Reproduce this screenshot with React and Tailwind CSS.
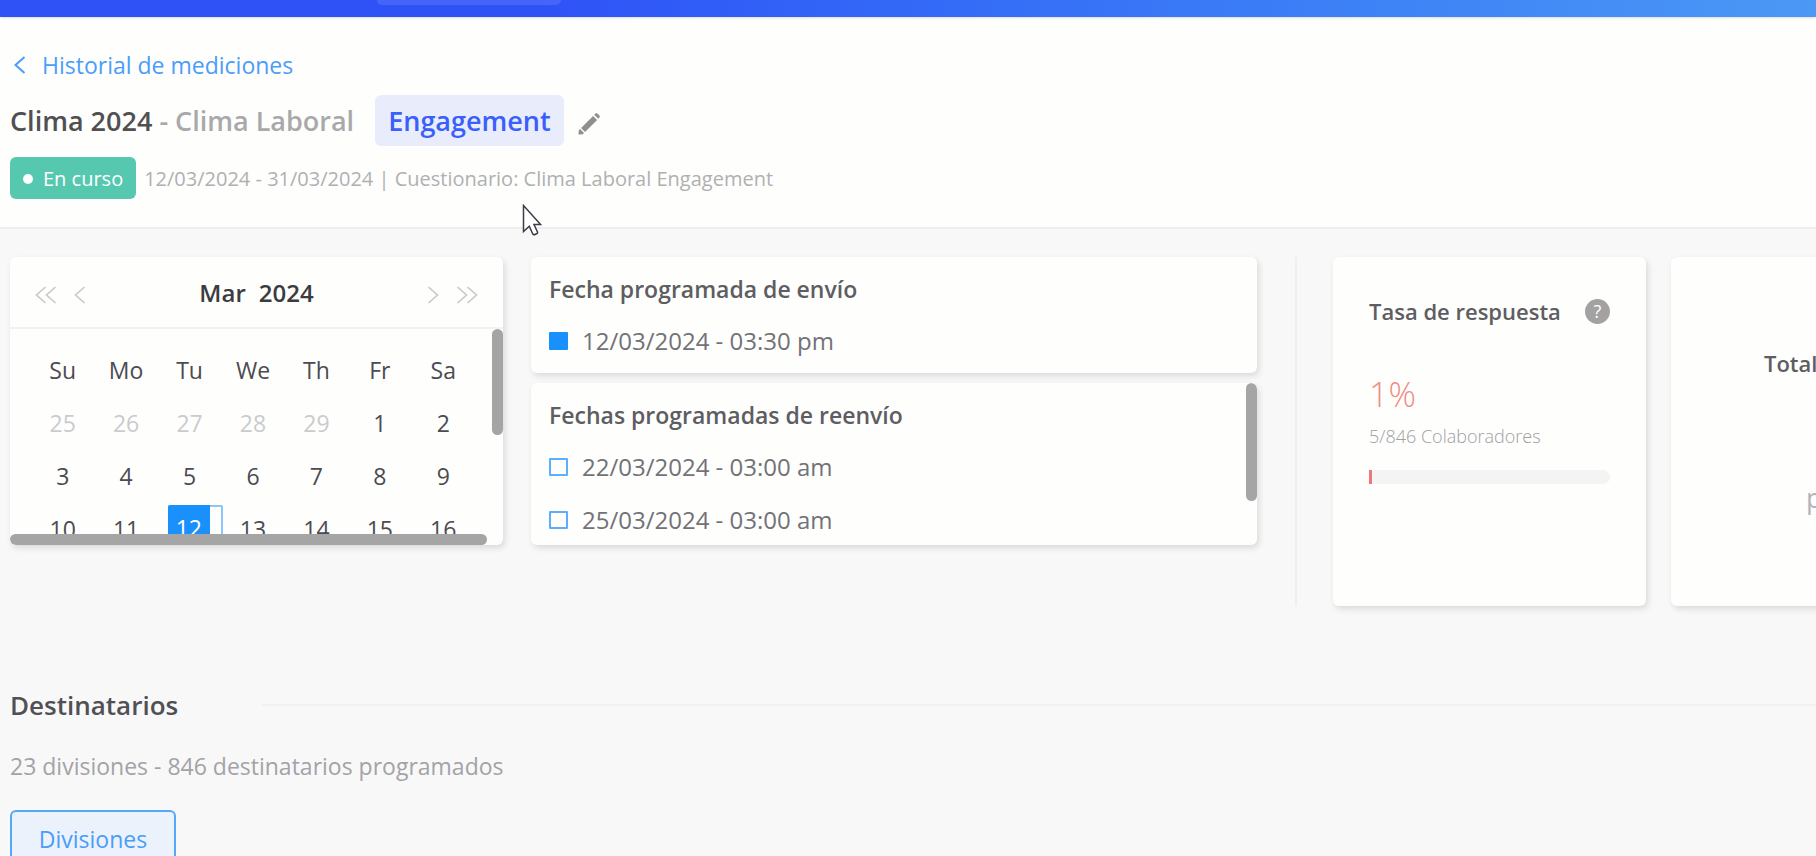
const WEEKDAYS = ["Su", "Mo", "Tu", "We", "Th", "Fr", "Sa"];

const WEEKS = [
  [25, 26, 27, 28, 29, 1, 2],
  [3, 4, 5, 6, 7, 8, 9],
  [10, 11, 12, 13, 14, 15, 16],
];

const RESEND_DATES = ["22/03/2024 - 03:00 am", "25/03/2024 - 03:00 am"];

const CARD = "rounded-md bg-[#fefefd] shadow-[2px_3px_6px_rgba(0,0,0,0.12)]";

function Chevron({ double = false, flip = false, className = "" }) {
  return (
    <svg
      viewBox={double ? "0 0 22 18" : "0 0 12 18"}
      className={`${double ? "w-[22px]" : "w-3"} h-[18px] ${flip ? "rotate-180" : ""} ${className}`}
      fill="none"
      stroke="currentColor"
      strokeWidth="1.6"
      aria-hidden="true"
    >
      <path d="M10.500 1L1.500 9l9 8" />
      {double && <path d="M20.500 1L11.500 9l9 8" />}
    </svg>
  );
}

function PageHeader() {
  return (
    <header className="relative h-[212px] shrink-0 border-b-2 border-[#eeeeee] bg-[#fefefd] px-[10px] pt-7">
      <a
        href="#historial"
        className="flex w-fit items-center gap-4 pl-1 text-[23px] leading-10 text-[#4a9df8]"
      >
        <Chevron className="stroke-2" />
        Historial de mediciones
      </a>

      <div className="mt-[10px] flex h-[51px] items-center text-[27px] font-semibold">
        <h1 className="pt-[2px] text-[#505052]">
          Clima 2024 <span className="text-[#a9a9ab]">- Clima Laboral</span>
        </h1>
        <span className="ml-[21px] flex h-full items-center rounded-md bg-[#e9edfb] px-[13px] pt-[2px] text-[#3a5ffb]">
          Engagement
        </span>
        <button type="button" aria-label="Editar" className="ml-[11px] text-[#8f8f8f]">
          <svg viewBox="0 0 24 24" className="mt-[6px] size-7" fill="currentColor">
            <path d="M3.300 17.300 3 21l3.700-.3 1-1-3.400-3.400zM5.200 15.400l10.300-10.300 3.400 3.400L8.600 18.800zM16.500 4.100l1-1c.6-.6 1.300-.5 1.800 0l1.600 1.600c.5.500.6 1.200 0 1.800l-1 1z" />
          </svg>
        </button>
      </div>

      <div className="mt-[11px] flex items-center gap-2 text-[20px] text-[#b0b0b2]">
        <span className="flex h-[42px] items-center gap-[10px] rounded-md bg-[#56c8b0] px-[13px] pt-[2px] text-white">
          <span className="size-[10px] rounded-full bg-white" />
          En curso
        </span>
        <p className="pt-[2px]">
          12/03/2024 - 31/03/2024 | Cuestionario: Clima Laboral Engagement
        </p>
      </div>

      <svg
        viewBox="0 0 20 32"
        className="absolute top-[187px] left-[522px] h-8 w-5"
        fill="#fff"
        stroke="#3c3c48"
        strokeWidth="1.5"
        aria-hidden="true"
      >
        <path d="M1.500 1.500v26l5.800-5.300 3.600 8 1.300.6 3-1.400.4-1.200-3.600-7.700h6.600z" />
      </svg>
    </header>
  );
}

function CalendarDay({ day, muted, selected }) {
  if (selected) {
    return (
      <td className="h-[53px] p-0 align-top">
        <div className="mt-[2px] ml-[10px] flex h-[46px] w-[55px] rounded-xs border-t-2 border-r-2 border-[#8cc5fb]">
          <span className="-mt-[2px] flex w-[42px] items-center justify-center rounded-tl-xs bg-[#1a90fc] text-white">
            {day}
          </span>
        </div>
      </td>
    );
  }
  return (
    <td className={`h-[53px] p-0 text-center ${muted ? "text-[#cbcbcd]" : ""}`}>
      {day}
    </td>
  );
}

function CalendarCard() {
  return (
    <section className={`${CARD} relative flex h-[288px] w-[493px] shrink-0 flex-col overflow-hidden`}>
      <div className="flex h-[72px] shrink-0 items-center border-b-2 border-[#f2f2f3] px-[25px] pt-[6px] text-[#c8c8ca]">
        <button type="button" aria-label="Año anterior">
          <Chevron double />
        </button>
        <button type="button" aria-label="Mes anterior" className="ml-[17px]">
          <Chevron />
        </button>
        <h2 className="flex-1 pb-1 text-center text-[24px] font-semibold text-[#3b3b40]">
          <span className="mr-[13px]">Mar</span>
          <span>2024</span>
        </h2>
        <button type="button" aria-label="Mes siguiente" className="mr-[17px]">
          <Chevron flip />
        </button>
        <button type="button" aria-label="Año siguiente">
          <Chevron double flip />
        </button>
      </div>

      <div className="h-[205px] overflow-hidden pt-[15px] pr-[28px] pl-[21px]">
        <table className="w-full table-fixed border-collapse text-[23px] text-[#4b4b50]">
          <thead>
            <tr>
              {WEEKDAYS.map((name) => (
                <th key={name} scope="col" className="h-[53px] p-0 font-normal">
                  {name}
                </th>
              ))}
            </tr>
          </thead>
          <tbody>
            {WEEKS.map((week, row) => (
              <tr key={week[0]}>
                {week.map((day) => (
                  <CalendarDay
                    key={day}
                    day={day}
                    muted={row === 0 && day > 20}
                    selected={day === 12}
                  />
                ))}
              </tr>
            ))}
          </tbody>
        </table>
      </div>

      <span className="absolute top-[72px] right-0 h-[106px] w-[11px] rounded-full bg-[#a5a5a5]" />
      <span className="absolute bottom-0 left-0 h-[11px] w-[477px] rounded-full bg-[#a5a5a5]" />
    </section>
  );
}

function DateRow({ filled = false, children }) {
  return (
    <li className="flex h-[53px] items-center gap-[14px]">
      <span
        className={`h-[18px] w-[19px] rounded-[1px] border-2 ${
          filled ? "border-[#1a90fc] bg-[#1a90fc]" : "border-[#5cb0fb]"
        }`}
      />
      {children}
    </li>
  );
}

function ScheduleCards() {
  return (
    <div className="flex w-[726px] shrink-0 flex-col gap-[10px] text-[#727277]">
      <section className={`${CARD} h-[116px] px-[18px] pt-[10px]`}>
        <h2 className="mb-[3px] text-[23px] leading-[44px] font-semibold text-[#5d5d62]">
          Fecha programada de envío
        </h2>
        <ul className="text-[24px]">
          <DateRow filled>12/03/2024 - 03:30 pm</DateRow>
        </ul>
      </section>
      <section className={`${CARD} relative h-[162px] overflow-hidden px-[18px] pt-[10px]`}>
        <h2 className="mb-[3px] text-[23px] leading-[44px] font-semibold text-[#5d5d62]">
          Fechas programadas de reenvío
        </h2>
        <ul className="text-[24px]">
          {RESEND_DATES.map((date) => (
            <DateRow key={date}>{date}</DateRow>
          ))}
        </ul>
        <span className="absolute top-0 right-0 h-[118px] w-[11px] rounded-full bg-[#a5a5a5]" />
      </section>
    </div>
  );
}

function ResponseRateCard() {
  const answered = 5;
  const total = 846;
  const rate = Math.round((answered / total) * 100);

  return (
    <section className={`${CARD} h-[349px] w-[313px] shrink-0 px-9 pt-8`}>
      <div className="flex h-11 items-center justify-between text-[22px] font-semibold text-[#5d5d62]">
        <h2 className="whitespace-nowrap">Tasa de respuesta</h2>
        <button
          type="button"
          aria-label="Ayuda"
          className="flex size-[25px] shrink-0 items-center justify-center rounded-full bg-[#a3a1a1] text-[18px] font-normal text-white"
        >
          ?
        </button>
      </div>
      <p className="mt-9 text-[34px] leading-[50px] font-light text-[#ee8d87]">{rate}%</p>
      <p className="mt-px text-[18px] leading-8 font-light text-[#a0a0a5]">
        {answered}/{total} Colaboradores
      </p>
      <div className="mt-[18px] h-[14px] overflow-hidden rounded-r-full bg-[#f4f4f5]">
        <div className="h-full min-w-[3px] bg-[#ef7777]" style={{ width: `${rate}%` }} />
      </div>
    </section>
  );
}

function TotalCard() {
  return (
    <section className={`${CARD} h-[349px] w-[313px] shrink-0 pt-[84px]`}>
      <h2 className="pl-[93px] text-[22px] leading-[44px] font-semibold text-[#5d5d62]">Total</h2>
      <p className="mt-[88px] pl-[135px] text-[27px] leading-[50px] text-[#b3b3b8]">p</p>
    </section>
  );
}

export default function App() {
  return (
    <div className="flex h-screen flex-col overflow-hidden bg-[#f8f8f9] font-['Open_Sans','Noto_Sans',sans-serif]">
      <nav className="z-10 h-[17px] shrink-0 bg-linear-to-r from-[#2f52f7] from-30% to-[#4b98f5] px-[377px] shadow-sm">
        <div className="h-[5px] w-[184px] rounded-b-md bg-[#4764f9]" />
      </nav>

      <PageHeader />

      <main className="px-[10px] pt-7">
        <div className="flex items-start">
          <CalendarCard />
          <div className="w-7 shrink-0" />
          <ScheduleCards />
          <div className="ml-[38px] h-[349px] w-[2px] shrink-0 bg-[#efeff0]" />
          <div className="ml-9 flex gap-[25px]">
            <ResponseRateCard />
            <TotalCard />
          </div>
        </div>

        <section className="mt-[79px]">
          <div className="-mr-[10px] flex items-center">
            <h2 className="w-[252px] shrink-0 text-[26px] leading-10 font-semibold text-[#505055]">
              Destinatarios
            </h2>
            <hr className="flex-1 border-t-2 border-[#f3eeef]" />
          </div>
          <p className="mt-[21px] text-[23px] leading-10 text-[#a3a3a6]">
            23 divisiones - 846 destinatarios programados
          </p>
          <button
            type="button"
            className="mt-6 flex h-[58px] w-[166px] items-center justify-center rounded-md border-2 border-[#55a8f8] bg-[#ebf2fb] text-[23px] text-[#4a9df8]"
          >
            Divisiones
          </button>
        </section>
      </main>
    </div>
  );
}
